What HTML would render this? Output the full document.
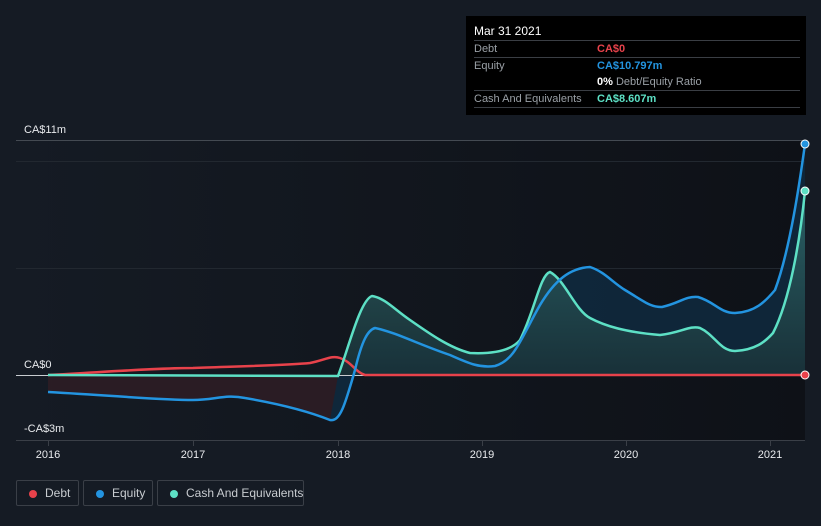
<!DOCTYPE html>
<html><head><meta charset="utf-8"><style>
body{margin:0;width:821px;height:526px;background:#151b24;font-family:"Liberation Sans",sans-serif;overflow:hidden;position:relative}
.tt{position:absolute;left:466px;top:16px;width:340px;height:99px;background:#000;}
.tt .h{position:absolute;left:8px;top:8px;color:#fff;font-size:12px}
.row{position:absolute;left:8px;width:326px;border-top:1px solid #3a3e44;height:16px;font-size:11px;color:#9aa0a6;line-height:16px;white-space:nowrap}
.row span{position:absolute;left:123px;font-weight:bold}
.lg{position:absolute;top:480px;height:26px;border:1px solid #3a3f47;border-radius:2px;color:#c8ccd0;font-size:12px;line-height:24px;box-sizing:border-box;white-space:nowrap}
.lg i{position:absolute;left:12px;top:9px;width:8px;height:8px;border-radius:50%}
</style></head><body>
<svg width="821" height="526" style="position:absolute;left:0;top:0">
<defs><linearGradient id="bg" x1="0" x2="1"><stop offset="0" stop-color="#151b24"/><stop offset="1" stop-color="#0e1117"/></linearGradient>
<linearGradient id="cf" x1="0" y1="0" x2="0" y2="1"><stop offset="0" stop-color="#2e6a6c"/><stop offset="1" stop-color="#1a3238"/></linearGradient></defs>
<rect x="16" y="140" width="789" height="300" fill="url(#bg)"/>
<line x1="16" y1="140.5" x2="805" y2="140.5" stroke="#444a52"/>
<line x1="16" y1="161.5" x2="805" y2="161.5" stroke="#222830"/>
<line x1="16" y1="268.5" x2="805" y2="268.5" stroke="#222830"/>
<line x1="16" y1="440.5" x2="805" y2="440.5" stroke="#3a3f47"/>
<path d="M48,392 C120,396 160,400 193,400 C215,400 225,394 245,398 C280,404 310,412 330,420 C340,422 345,405 355,370 C362,340 368,330 375,328 C395,332 420,345 450,355 C470,364 480,368 495,366 C515,360 520,340 540,305 C555,280 570,268 590,267 C605,272 612,282 625,290 C645,302 650,307 662,307 C680,303 685,296 698,297 C715,302 720,313 735,313 C755,312 765,302 775,290 C790,250 800,180 805,144 L805,375 L48,375Z" fill="#0f2a40" opacity="0.85"/>
<path d="M48,375 L338,376 C348,350 360,300 372,296 C385,298 395,310 410,320 C430,334 450,348 470,353 C490,354 510,352 520,340 C535,310 540,275 550,272 C565,280 575,310 590,318 C605,326 625,332 660,335 C680,333 690,325 700,328 C715,335 720,351 735,351 C755,350 765,342 773,333 C790,300 800,240 805,191 L805,375Z" fill="url(#cf)" opacity="0.85"/>
<path d="M48,375 L48,392 C120,396 160,400 193,400 C215,400 225,394 245,398 C280,404 310,412 330,420 L338,376 Z" fill="#2e1c22" opacity="0.9"/>
<line x1="16" y1="375.5" x2="805" y2="375.5" stroke="#c8ccd0" stroke-width="1"/>
<path d="M48,375 C120,371 160,368 193,368 C250,366 290,365 310,363 C325,360 332,355 340,358 C352,362 355,372 365,375 L805,375" fill="none" stroke="#e8424b" stroke-width="2.5"/>
<path d="M48,375 L338,376 C348,350 360,300 372,296 C385,298 395,310 410,320 C430,334 450,348 470,353 C490,354 510,352 520,340 C535,310 540,275 550,272 C565,280 575,310 590,318 C605,326 625,332 660,335 C680,333 690,325 700,328 C715,335 720,351 735,351 C755,350 765,342 773,333 C790,300 800,240 805,191" fill="none" stroke="#5de0c5" stroke-width="2.5"/>
<path d="M48,392 C120,396 160,400 193,400 C215,400 225,394 245,398 C280,404 310,412 330,420 C340,422 345,405 355,370 C362,340 368,330 375,328 C395,332 420,345 450,355 C470,364 480,368 495,366 C515,360 520,340 540,305 C555,280 570,268 590,267 C605,272 612,282 625,290 C645,302 650,307 662,307 C680,303 685,296 698,297 C715,302 720,313 735,313 C755,312 765,302 775,290 C790,250 800,180 805,144" fill="none" stroke="#2394e0" stroke-width="2.5"/>
<circle cx="805" cy="144" r="4" fill="#2394e0" stroke="#fff" stroke-width="1"/>
<circle cx="805" cy="191" r="4" fill="#5de0c5" stroke="#fff" stroke-width="1"/>
<circle cx="805" cy="375" r="4" fill="#e8424b" stroke="#fff" stroke-width="1"/>
<g stroke="#3a3f47"><line x1="48.5" y1="440" x2="48.5" y2="446"/><line x1="193.5" y1="440" x2="193.5" y2="446"/><line x1="338.5" y1="440" x2="338.5" y2="446"/><line x1="482.5" y1="440" x2="482.5" y2="446"/><line x1="626.5" y1="440" x2="626.5" y2="446"/><line x1="770.5" y1="440" x2="770.5" y2="446"/></g>
<g fill="#e8eaed" font-size="11" font-family="Liberation Sans,sans-serif">
<text x="24" y="133">CA$11m</text><text x="24" y="368">CA$0</text><text x="24" y="432">-CA$3m</text>
<g text-anchor="middle"><text x="48" y="458">2016</text><text x="193" y="458">2017</text><text x="338" y="458">2018</text><text x="482" y="458">2019</text><text x="626" y="458">2020</text><text x="770" y="458">2021</text></g></g>
</svg>
<div class="tt"><div class="h">Mar 31 2021</div>
<div class="row" style="top:24px">Debt<span style="color:#e8424b">CA$0</span></div>
<div class="row" style="top:41px">Equity<span style="color:#2394e0">CA$10.797m</span></div>
<div class="row" style="top:58px;border-top:none"><span style="color:#fff">0% <b style="color:#9aa0a6;font-weight:normal">Debt/Equity Ratio</b></span></div>
<div class="row" style="top:74px">Cash And Equivalents<span style="color:#5de0c5">CA$8.607m</span></div>
<div class="row" style="top:91px;height:0"></div>
</div>
<div class="lg" style="left:16px;width:63px"><i style="background:#e8424b"></i><span style="position:absolute;left:28px">Debt</span></div>
<div class="lg" style="left:83px;width:70px"><i style="background:#2394e0"></i><span style="position:absolute;left:28px">Equity</span></div>
<div class="lg" style="left:157px;width:147px"><i style="background:#5de0c5"></i><span style="position:absolute;left:28px">Cash And Equivalents</span></div>
</body></html>
